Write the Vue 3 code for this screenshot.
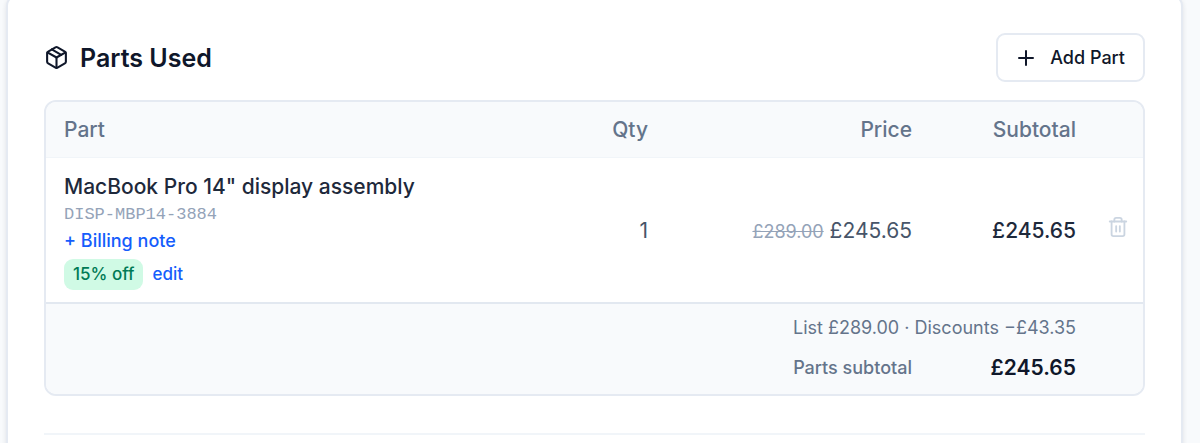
<template>
  <main class="page">
    <section class="card">
      <header class="card-header">
        <h2 class="card-title">
          <svg class="icon-box" viewBox="0 0 24 24" aria-hidden="true">
            <path d="M11 21.73a2 2 0 0 0 2 0l7-4A2 2 0 0 0 21 16V8a2 2 0 0 0-1-1.73l-7-4a2 2 0 0 0-2 0l-7 4A2 2 0 0 0 3 8v8a2 2 0 0 0 1 1.73z" />
            <path d="M12 22V12" />
            <path d="M3.3 7 12 12l8.7-5" />
            <path d="m7.5 4.27 9 5.15" />
          </svg>
          Parts Used
        </h2>
        <button type="button" class="btn-add">
          <svg class="icon-plus" viewBox="0 0 24 24" aria-hidden="true">
            <path d="M5 12h14M12 5v14" />
          </svg>
          Add Part
        </button>
      </header>

      <div class="table-wrap">
        <table>
          <colgroup>
            <col />
            <col class="col-qty" />
            <col class="col-price" />
            <col class="col-subtotal" />
            <col class="col-action" />
          </colgroup>
          <thead>
            <tr>
              <th scope="col" class="left">Part</th>
              <th scope="col">Qty</th>
              <th scope="col">Price</th>
              <th scope="col">Subtotal</th>
              <td></td>
            </tr>
          </thead>
          <tbody>
            <tr v-for="part in parts" :key="part.sku">
              <td class="left">
                <div class="name">{{ part.name }}</div>
                <div class="sku">{{ part.sku }}</div>
                <button type="button" class="btn-link note">+ Billing note</button>
                <div class="discount">
                  <span class="badge">{{ part.discount }}% off</span>
                  <button type="button" class="btn-link">edit</button>
                </div>
              </td>
              <td>{{ part.qty }}</td>
              <td>
                <s class="list-price">{{ money(part.listPrice) }}</s>
                {{ money(part.price) }}
              </td>
              <td class="line-total">{{ money(part.price * part.qty) }}</td>
              <td class="action">
                <button type="button" class="btn-remove" aria-label="Remove part">
                  <svg class="icon-trash" viewBox="0 0 24 24" aria-hidden="true">
                    <path d="M3 6h18" />
                    <path d="M19 6v14a2 2 0 0 1-2 2H7a2 2 0 0 1-2-2V6" />
                    <path d="M8 6V4a2 2 0 0 1 2-2h4a2 2 0 0 1 2 2v2" />
                    <path d="M10 11v6M14 11v6" />
                  </svg>
                </button>
              </td>
            </tr>
          </tbody>
          <tfoot>
            <tr class="summary">
              <td colspan="4">List {{ money(listTotal) }} · Discounts −{{ money(listTotal - subtotal) }}</td>
              <td></td>
            </tr>
            <tr class="total">
              <th scope="row" colspan="3">Parts subtotal</th>
              <td>{{ money(subtotal) }}</td>
              <td></td>
            </tr>
          </tfoot>
        </table>
      </div>

      <hr class="divider" />
    </section>
  </main>
</template>

<script setup>
import { computed, ref } from 'vue'

const parts = ref([
  {
    name: 'MacBook Pro 14" display assembly',
    sku: 'DISP-MBP14-3884',
    qty: 1,
    discount: 15,
    listPrice: 289,
    price: 245.65
  }
])

const listTotal = computed(() => parts.value.reduce((sum, p) => sum + p.listPrice * p.qty, 0))
const subtotal = computed(() => parts.value.reduce((sum, p) => sum + p.price * p.qty, 0))

function money(value) {
  return '£' + value.toFixed(2)
}
</script>

<style>
body {
  margin: 0;
  background: #f8fafc;
}
</style>

<style scoped>
.page {
  display: flow-root;
  overflow: hidden;
  padding: 0 17px 0 6px;
  font-family: Inter, sans-serif;
  color: #0f172a;
}

.card {
  margin-top: -6px;
  padding: 37px 36px 24px;
  background: #fff;
  border: 2px solid #e5eaf2;
  border-radius: 12px;
  box-shadow: 0 2px 5px rgba(15, 23, 42, 0.1);
}

/* Header */
.card-header {
  display: flex;
  align-items: center;
  justify-content: space-between;
  margin-bottom: 18px;
}

.card-title {
  display: flex;
  align-items: center;
  gap: 11px;
  margin: 0;
  font-size: 25px;
  font-weight: 600;
  line-height: 38px;
}

svg {
  display: block;
  fill: none;
  stroke: currentColor;
  stroke-width: 2;
  stroke-linecap: round;
  stroke-linejoin: round;
}

.icon-box {
  width: 25px;
  height: 25px;
}

.icon-plus {
  width: 24px;
  height: 24px;
}

.icon-trash {
  width: 22px;
  height: 22px;
}

button {
  font-family: inherit;
  cursor: pointer;
}

.btn-add {
  display: flex;
  align-items: center;
  gap: 12px;
  height: 49px;
  padding: 0 18px 0 16px;
  background: #fff;
  border: 2px solid #e5eaf2;
  border-radius: 9px;
  color: #0f172a;
  font-size: 18px;
  font-weight: 500;
}

/* Table */
.table-wrap {
  overflow: hidden;
  border: 2px solid #e5eaf2;
  border-radius: 12px;
}

table {
  width: 100%;
  table-layout: fixed;
  border-collapse: collapse;
  font-size: 21px;
  line-height: 31px;
}

.col-qty {
  width: 108px;
}

.col-price {
  width: 264px;
}

.col-subtotal {
  width: 164px;
}

.col-action {
  width: 48px;
}

th,
td {
  padding: 12px 19px;
  text-align: right;
  font-weight: 400;
}

.left {
  padding-left: 18px;
  text-align: left;
}

thead {
  background: #f8fafc;
  color: #64748b;
}

thead th {
  font-weight: 500;
}

tbody tr {
  border-top: 1px solid #f1f5f9;
}

tbody td {
  padding-top: 13px;
  color: #475569;
}

.name {
  color: #1e293b;
  font-weight: 500;
}

.sku {
  color: #94a3b8;
  font-family: "Liberation Mono", monospace;
  font-size: 17px;
  line-height: 25px;
}

.btn-link {
  display: block;
  padding: 0;
  background: none;
  border: 0;
  color: #155dfc;
  font-size: 17px;
  font-weight: 500;
  line-height: 25px;
}

.note {
  font-size: 18px;
  line-height: 28px;
}

.discount {
  display: flex;
  align-items: center;
  gap: 9px;
  margin-top: 4px;
}

.badge {
  padding: 3px 9px;
  background: #d0fae5;
  border-radius: 9px;
  color: #007a55;
  font-size: 17px;
  font-weight: 500;
  line-height: 25px;
}

.list-price {
  color: #94a3b8;
  font-size: 18px;
}

tbody .line-total {
  color: #1e293b;
  font-weight: 500;
}

td.action {
  padding: 0;
}

.btn-remove {
  display: block;
  margin: 0 0 6px 12px;
  padding: 0;
  background: none;
  border: 0;
  color: #cbd5e1;
}

/* Totals */
tfoot {
  background: #f8fafc;
  border-top: 2px solid #e2e8f0;
  color: #64748b;
}

.summary td {
  padding-top: 11px;
  padding-bottom: 0;
  font-size: 18px;
  line-height: 25px;
}

.total th,
.total td {
  padding-bottom: 11px;
}

.total th {
  font-size: 18px;
  font-weight: 500;
}

.total td {
  color: #0f172a;
  font-weight: 600;
}

.divider {
  margin: 37px 0 0;
  border: 0;
  border-top: 2px solid #f1f5f9;
}
</style>
